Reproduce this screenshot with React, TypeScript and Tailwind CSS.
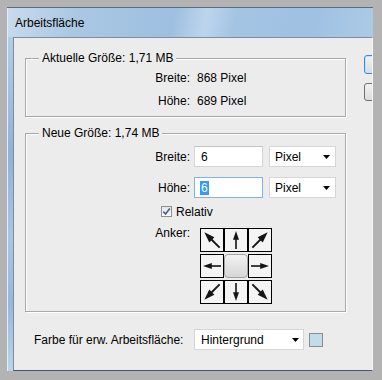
import React from 'react'

function Arrow({ rotate }: { rotate: number }) {
  const diagonal = rotate % 90 !== 0
  const scale = diagonal ? 1.2 : 1
  return (
    <svg width="22" height="22" viewBox="0 0 22 22">
      <g transform={`rotate(${rotate} 11 11) translate(11 11) scale(${scale}) translate(-11 -11)`}>
        <rect x="10.2" y="8" width="1.6" height="12" fill="#151515" />
        <polygon points="11,2 8,10.8 14,10.8" fill="#151515" />
      </g>
    </svg>
  )
}

function AnchorCell({ rotate }: { rotate: number }) {
  return (
    <div className="w-[24px] h-[24px] border border-black bg-[#f4f4f4] flex items-center justify-center">
      <Arrow rotate={rotate} />
    </div>
  )
}

function DropTriangle() {
  return (
    <svg width="7" height="4" viewBox="0 0 7 4">
      <polygon points="0,0 7,0 3.5,4" fill="#000" />
    </svg>
  )
}

function Select({ label, className }: { label: string; className: string }) {
  return (
    <div className={`flex items-center justify-between bg-white border border-[#d6d6d6] ${className}`}>
      <span>{label}</span>
      <DropTriangle />
    </div>
  )
}

export default function App() {
  return (
    <div className="w-[382px] h-[380px] bg-[#b3b3b3] pt-[7px] pl-[7px] pr-[9px] pb-[9px] font-['Liberation_Sans',Arial,sans-serif] text-[12px] leading-[14px] text-black">
      <div className="h-full flex flex-col border-t border-[#5f6d7c]">
        {/* Title bar */}
        <div className="h-[29px] shrink-0 flex items-center pl-[7px] border-l border-[#e4edf6] bg-[linear-gradient(100deg,#c9dbec_0%,#aac8e4_18%,#9ebfe0_45%,#bcd5ed_54%,#a4c4e3_62%,#9fc1e2_82%,#abcae6_100%)]">
          Arbeitsfläche
        </div>

        <div className="flex-1 flex min-h-0">
          {/* Left window frame */}
          <div className="w-[6px] shrink-0 border-l border-[#e4edf6] bg-[linear-gradient(180deg,#b2cde7_0%,#8eb3d8_35%,#a8c6e3_60%,#94b9dc_80%,#bcd4eb_100%)]" />

          {/* Dialog body */}
          <div className="flex-1 flex flex-col bg-[#ececec] border-l border-t border-b border-r border-l-[#7e8d9e] border-t-[#7e8d9e] border-b-[#3d5877] border-r-[#f6f6f6] overflow-hidden">
            <div className="flex">
              <div className="pl-[11px] pt-[13px] shrink-0">
                {/* Aktuelle Größe */}
                <fieldset className="w-[321px] border border-[#a8a8a8] pb-[4px] shadow-[inset_1px_1px_0_#ffffff,1px_1px_0_#ffffff]">
                  <legend className="ml-[13px] px-[3px] bg-[#ececec]">Aktuelle Größe: 1,71 MB</legend>
                  <div className="grid grid-cols-[164px_auto] gap-x-[7px] pt-[1px]">
                    <div className="h-[23px] flex items-center justify-end">Breite:</div>
                    <div className="h-[23px] flex items-center">868 Pixel</div>
                    <div className="h-[23px] flex items-center justify-end">Höhe:</div>
                    <div className="h-[23px] flex items-center">689 Pixel</div>
                  </div>
                </fieldset>

                {/* Neue Größe */}
                <fieldset className="mt-[9px] w-[321px] border border-[#a8a8a8] pb-[7px] shadow-[inset_1px_1px_0_#ffffff,1px_1px_0_#ffffff]">
                  <legend className="ml-[13px] px-[3px] bg-[#ececec]">Neue Größe: 1,74 MB</legend>
                  <div className="pt-[6px] flex flex-col">
                    <div className="flex items-center">
                      <div className="w-[164px] text-right">Breite:</div>
                      <div className="ml-[4px] w-[69px] h-[21px] flex items-center pl-[6px] bg-white border border-[#d3d6da] border-t-[#c0c3c8]">
                        6
                      </div>
                      <Select label="Pixel" className="ml-[6px] w-[67px] h-[21px] pl-[5px] pr-[5px]" />
                    </div>

                    <div className="mt-[10px] flex items-center">
                      <div className="w-[164px] text-right">Höhe:</div>
                      <div className="ml-[4px] w-[69px] h-[21px] flex items-center pl-[5px] bg-white border border-[#7fb3e6]">
                        <span className="bg-[#3399ff] text-white px-[1px]">6</span>
                      </div>
                      <Select label="Pixel" className="ml-[6px] w-[67px] h-[21px] pl-[5px] pr-[5px]" />
                    </div>

                    <div className="mt-[3px] h-[21px] flex items-center pl-[135px]">
                      <div className="w-[11px] h-[11px] border border-[#8e8f8f] bg-[linear-gradient(180deg,#e6e6e6,#fbfbfb)] flex items-center justify-center">
                        <svg width="9" height="9" viewBox="0 0 9 9">
                          <path d="M1.3 4.6 L3.6 7 L7.8 1.6" fill="none" stroke="#4a5e95" strokeWidth="1.7" />
                        </svg>
                      </div>
                      <span className="ml-[4px]">Relativ</span>
                    </div>

                    <div className="mt-[6px] flex items-start">
                      <div className="w-[164px] text-right -mt-[2px]">Anker:</div>
                      <div className="ml-[10px] flex flex-col gap-[2px]">
                        <div className="flex">
                          <AnchorCell rotate={-45} />
                          <AnchorCell rotate={0} />
                          <AnchorCell rotate={45} />
                        </div>
                        <div className="flex">
                          <AnchorCell rotate={-90} />
                          <div className="w-[24px] h-[24px] rounded-[4px] border border-[#a3a3a3] bg-[linear-gradient(180deg,#f3f3f3,#d6d6d6)]" />
                          <AnchorCell rotate={90} />
                        </div>
                        <div className="flex">
                          <AnchorCell rotate={-135} />
                          <AnchorCell rotate={180} />
                          <AnchorCell rotate={135} />
                        </div>
                      </div>
                    </div>
                  </div>
                </fieldset>
              </div>

              {/* OK / Cancel buttons, cut off by the screenshot */}
              <div className="ml-[18px] pt-[17px] shrink-0 flex flex-col">
                <div className="w-[75px] h-[19px] rounded-[3px] border border-[#3c8ad0] bg-[linear-gradient(180deg,#f2f2f2,#dcdcdc)] shadow-[inset_0_0_0_1px_#bfe3fa]" />
                <div className="mt-[9px] w-[75px] h-[18px] rounded-[3px] border border-[#707070] bg-[linear-gradient(180deg,#f2f2f2,#dcdcdc)]" />
              </div>
            </div>

            {/* Farbe */}
            <div className="mt-[17px] pl-[20px] flex items-center">
              <div className="w-[160px]">Farbe für erw. Arbeitsfläche:</div>
              <Select label="Hintergrund" className="w-[110px] h-[21px] pl-[6px] pr-[4px]" />
              <div className="ml-[5px] w-[14px] h-[14px] bg-[#c4dcea] border border-[#8c8c8c]" />
            </div>
          </div>
        </div>
      </div>
    </div>
  )
}
